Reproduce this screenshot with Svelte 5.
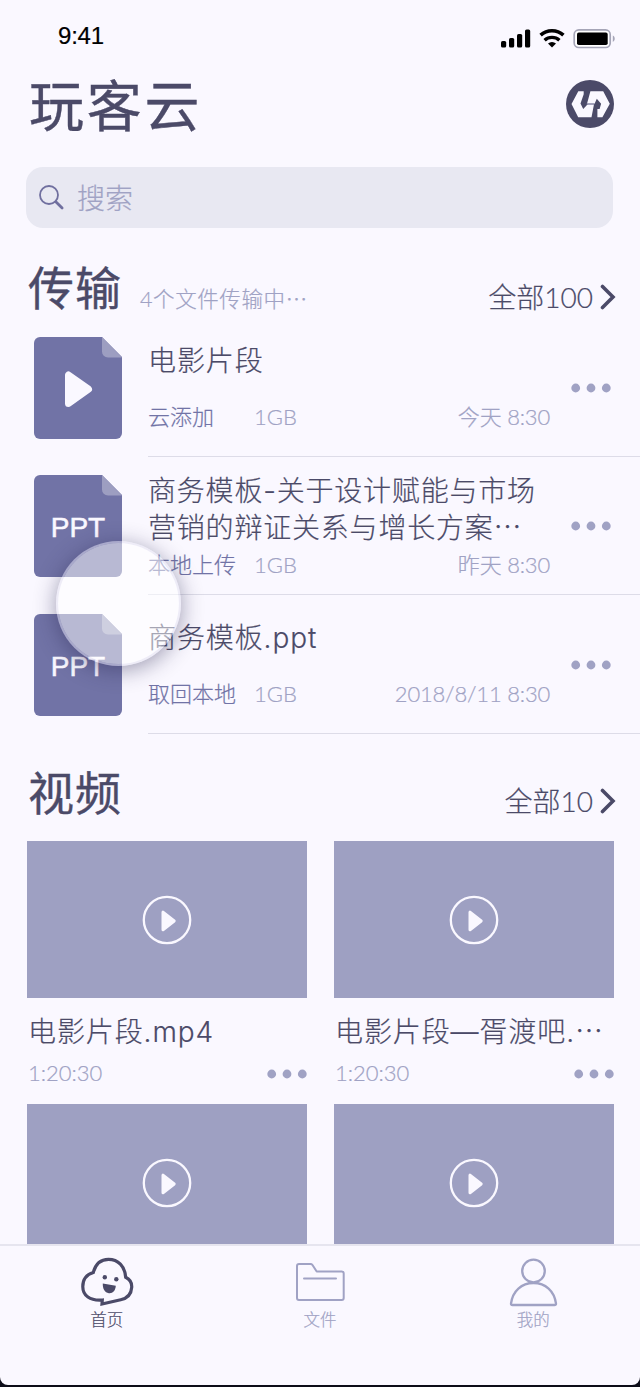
<script lang="ts">
  interface Transfer {
    name: string;
    kind: 'video' | 'ppt';
    source: string;
    size: string;
    time: string;
    wrap?: boolean;
  }

  const transfers: Transfer[] = [
    { name: '电影片段', kind: 'video', source: '云添加', size: '1GB', time: '今天 8:30' },
    {
      name: '商务模板-关于设计赋能与市场营销的辩证关系与增长方案⋯',
      kind: 'ppt',
      source: '本地上传',
      size: '1GB',
      time: '昨天 8:30',
      wrap: true
    },
    { name: '商务模板.ppt', kind: 'ppt', source: '取回本地', size: '1GB', time: '2018/8/11 8:30' }
  ];

  const videos = [
    { name: '电影片段.mp4', length: '1:20:30' },
    { name: '电影片段—胥渡吧.⋯', length: '1:20:30' },
    { name: '', length: '' },
    { name: '', length: '' }
  ];
</script>

{#snippet dots()}
  <svg class="dots" width="40" height="10" viewBox="0 0 40 10">
    <circle cx="4.7" cy="5" r="4.4" />
    <circle cx="20" cy="5" r="4.4" />
    <circle cx="35.3" cy="5" r="4.4" />
  </svg>
{/snippet}

{#snippet more(text: string)}
  <a class="more" href="#all">
    <span>{text}</span>
    <svg width="16" height="26" viewBox="0 0 16 26">
      <path d="M2.5 2.5 13 13 2.5 23.5" fill="none" stroke="#4b4a68" stroke-width="3.6" stroke-linecap="round" />
    </svg>
  </a>
{/snippet}

<div class="phone">
  <div class="status-bar">
    <span class="clock">9:41</span>
    <svg class="status-icons" width="116" height="22" viewBox="0 0 116 22">
      <rect x="1" y="13" width="5.2" height="6.5" rx="1.6" />
      <rect x="9" y="10" width="5.2" height="9.5" rx="1.6" />
      <rect x="17" y="6" width="5.2" height="13.5" rx="1.6" />
      <rect x="25" y="1.5" width="5.2" height="18" rx="1.6" />
      <path d="M40.6 7.2a17 17 0 0 1 22.8 0" fill="none" stroke="#000" stroke-width="3.6" />
      <path d="M44.6 12.2a11 11 0 0 1 14.8 0" fill="none" stroke="#000" stroke-width="3.4" />
      <path d="M48 15.6a6 6 0 0 1 8 0l-4 4z" />
      <rect x="74.2" y="1.9" width="36" height="17.6" rx="4.6" fill="#fff" stroke="#a5a5b7" stroke-width="1.7" />
      <rect x="77" y="4.6" width="30.7" height="12.4" rx="1.8" />
      <path d="M112.8 7.5c2.6 1.2 2.6 5.2 0 6.4z" fill="#a5a5b7" />
    </svg>
  </div>

  <header>
    <h1>玩客云</h1>
    <svg width="48" height="48" viewBox="0 0 48 48">
      <circle cx="24" cy="24" r="24" fill="#4b4a68" />
      <path d="M12.300 11.300h5.400v3L14.500 23.500l2.700 5.500 4.500-4.800H28L25.500 37.200H12.200L5.500 24z" fill="#faf8ff" />
      <path d="M24.400 11.300h12.800l6.600 12.400-7.400 13.500h-5V29h2.200l1.500-5.300-4.300-5-2.200 5h-7.600z" fill="#faf8ff" />
      <path d="M20.500 24h8" stroke="#77769a" stroke-width="1" />
    </svg>
  </header>

  <div class="search">
    <svg width="26" height="26" viewBox="0 0 26 26" fill="none" stroke="#706f9f" stroke-linecap="round">
      <circle cx="10" cy="10" r="9" stroke-width="1.8" />
      <path d="M16.800 16.800l6.300 6.300" stroke-width="2.800" />
    </svg>
    <span>搜索</span>
  </div>

  <div class="section-head transfer-head">
    <h2>传输</h2>
    <span class="hint">4个文件传输中⋯</span>
    {@render more('全部100')}
  </div>

  <ul class="transfers">
    {#each transfers as item}
      <li>
        <div class="file-icon">
          <svg width="88" height="102" viewBox="0 0 88 102">
            <path d="M6 0h62l20 20v76a6 6 0 0 1-6 6H6a6 6 0 0 1-6-6V6a6 6 0 0 1 6-6z" fill="#7173a6" />
            <path d="M68 0l20 20.500H74a6 6 0 0 1-6-6z" fill="#9d9ec1" />
            {#if item.kind === 'video'}
              <path d="M34.500 38v28.500L54.500 52.200z" fill="#faf8ff" stroke="#faf8ff" stroke-width="7" stroke-linejoin="round" />
            {/if}
          </svg>
          {#if item.kind === 'ppt'}
            <span>PPT</span>
          {/if}
        </div>
        <div class="file-body">
          <div class="file-text" class:wrap={item.wrap}>
            <div class="file-name">{item.name}</div>
            <div class="file-meta">
              <span class="source">{item.source}</span>
              <span class="size">{item.size}</span>
              <span class="time">{item.time}</span>
            </div>
          </div>
          {@render dots()}
        </div>
      </li>
    {/each}
  </ul>

  <div class="section-head video-head">
    <h2>视频</h2>
    {@render more('全部10')}
  </div>

  <div class="videos">
    {#each videos as video}
      <div class="video">
        <div class="thumb">
          <svg width="50" height="50" viewBox="0 0 50 50">
            <circle cx="25" cy="25" r="23.200" fill="none" stroke="#faf8ff" stroke-width="2.300" />
            <path d="M21 17.200v17.600L32.200 26z" fill="#faf8ff" stroke="#faf8ff" stroke-width="3" stroke-linejoin="round" />
          </svg>
        </div>
        {#if video.name}
          <div class="video-name">{video.name}</div>
          <div class="video-meta">
            <span>{video.length}</span>
            {@render dots()}
          </div>
        {/if}
      </div>
    {/each}
  </div>

  <nav>
    <a class="tab active" href="#home">
      <svg width="54" height="50" viewBox="0 0 54 50">
        <path
          d="M13.300 15.500C15.500 7 21 2.300 28.500 2.300c9.500 0 16.500 7 17.200 18 4.400 2.200 6.300 5.700 6 10.100-.4 6.500-4.500 11-11 12.300L22 47l.3-4C10 44 2.700 38.500 2.800 29.500c0-7 4-12 10.500-14z"
          fill="none"
          stroke="#4b4a68"
          stroke-width="3.200"
        />
        <circle cx="24.800" cy="20.300" r="2.200" fill="#4b4a68" />
        <circle cx="36.300" cy="22.300" r="2.200" fill="#4b4a68" />
        <path d="M22.800 26.500l13 2.300c-.3 5-3.300 8-7 7.400-4-.5-6.300-4.700-6-9.700z" fill="#4b4a68" />
      </svg>
      <span>首页</span>
    </a>
    <a class="tab" href="#files">
      <svg width="54" height="50" viewBox="0 0 54 50" fill="none" stroke="#a0a2c4" stroke-width="2" stroke-linejoin="round" stroke-linecap="round">
        <path d="M6 7h11.500q1.200 0 2 1l4.200 6.500h25q2 0 2 2v24.500q0 2-2 2H6q-2 0-2-2V9q0-2 2-2z" />
        <path d="M11 21.500h32" />
      </svg>
      <span>文件</span>
    </a>
    <a class="tab" href="#me">
      <svg width="54" height="50" viewBox="0 0 54 50" fill="none" stroke="#a0a2c4" stroke-width="2.300" stroke-linejoin="round">
        <circle cx="27.500" cy="14" r="11.300" />
        <path d="M5 46.500C6.700 34 15.500 26 27.500 26s20.800 8 22.500 20.500q.1 1.500-1.500 1.500h-42q-1.600 0-1.500-1.500z" />
      </svg>
      <span>我的</span>
    </a>
  </nav>

  <div class="touch"></div>
</div>

<style>
  :global(body) {
    margin: 0;
    background: #0c0c18;
  }

  .phone {
    position: relative;
    display: flex;
    flex-direction: column;
    box-sizing: border-box;
    width: 640px;
    height: 1385px;
    overflow: hidden;
    border-radius: 0 0 8px 8px;
    background: #faf8ff;
    color: #4b4a68;
    font-family: Lato, 'Noto Sans CJK SC', sans-serif;
    font-weight: 300;
    -webkit-text-stroke: 0.2px currentColor;
  }

  a {
    color: inherit;
    text-decoration: none;
  }

  h1,
  h2 {
    margin: 0;
    font-weight: 400;
    -webkit-text-stroke: 0.4px currentColor;
  }

  svg {
    display: block;
    flex: none;
  }

  .status-bar {
    display: flex;
    justify-content: space-between;
    align-items: center;
    height: 46px;
    padding: 14px 24px 0 58px;
  }

  .clock {
    margin-top: -2px;
    color: #000;
    font: 400 24px/28px 'Liberation Sans', sans-serif;
    letter-spacing: -0.2px;
  }

  .status-icons {
    margin-top: 4px;
  }

  header {
    display: flex;
    justify-content: space-between;
    align-items: center;
    height: 90px;
    padding: 0 26px 0 29px;
  }

  header svg {
    margin-top: -2px;
  }

  h1 {
    font-size: 55px;
    line-height: 80px;
    letter-spacing: 2.8px;
  }

  .search {
    display: flex;
    align-items: center;
    gap: 12px;
    box-sizing: border-box;
    height: 61px;
    margin: 17px 27px 0 26px;
    padding-left: 13px;
    border-radius: 17px;
    background: #e8e8f2;
    color: #a0a2c4;
    font-size: 28px;
    line-height: 40px;
  }

  .section-head {
    display: flex;
    align-items: center;
    padding: 0 24px 0 28px;
  }

  .transfer-head {
    height: 60px;
    margin-top: 30px;
  }

  .video-head {
    height: 60px;
    margin-top: 11px;
  }

  h2 {
    font-size: 46px;
    line-height: 60px;
    letter-spacing: 1px;
  }

  .hint {
    margin: 22px 0 0 18px;
    color: #a0a2c4;
    font-size: 21.5px;
    line-height: 30px;
    letter-spacing: 0.6px;
  }

  .more {
    display: flex;
    align-items: center;
    gap: 7px;
    margin: 17px 0 0 auto;
    font-size: 28px;
    line-height: 36px;
  }

  .transfers {
    margin: 0;
    padding: 19px 0 0 34px;
    list-style: none;
  }

  li {
    display: flex;
    gap: 26px;
    height: 138.3px;
  }

  .file-icon {
    display: grid;
    flex: none;
    height: 102px;
  }

  .file-icon > * {
    grid-area: 1 / 1;
  }

  .file-icon span {
    place-self: center;
    color: #faf8ff;
    font: 400 28px/32px 'Liberation Sans', sans-serif;
    margin-top: 4px;
    -webkit-text-stroke: 0.5px #faf8ff;
  }

  .file-body {
    display: flex;
    flex: 1;
    justify-content: space-between;
    box-sizing: border-box;
    height: 120px;
    padding-right: 29px;
    border-bottom: 1px solid #dddce8;
  }

  .file-body .dots {
    margin-top: 46px;
  }

  .dots {
    fill: #a0a2c4;
  }

  .file-text {
    width: 402px;
    padding-top: 6px;
  }

  .file-name,
  .video-name {
    font-family: Inter, 'Noto Sans CJK SC', sans-serif;
    font-size: 28px;
    line-height: 37px;
    letter-spacing: 0.9px;
  }

  .file-meta {
    display: flex;
    margin-top: 22px;
    color: #a0a2c4;
    font-size: 22px;
    line-height: 30px;
  }

  .file-text.wrap {
    padding-top: 0;
    margin-top: -2px;
  }

  .wrap .file-name {
    width: 390px;
    letter-spacing: 0.8px;
    word-break: break-all;
  }

  .wrap .file-meta {
    margin-top: 3px;
  }

  .source {
    width: 106px;
    color: #7173a6;
  }

  .time {
    margin-left: auto;
    letter-spacing: -0.2px;
  }

  .videos {
    display: grid;
    grid-template-columns: 280px 280px;
    grid-template-rows: 263px 140px;
    gap: 0 27px;
    height: 403px;
    margin: 18px 26px 0 27px;
    overflow: hidden;
  }

  .thumb {
    display: grid;
    place-items: center;
    box-sizing: border-box;
    height: 157px;
    padding-top: 2px;
    background: #9ea0c2;
  }

  .video-name {
    margin-top: 16px;
    padding-left: 1px;
    white-space: nowrap;
  }

  .video-meta {
    display: flex;
    justify-content: space-between;
    align-items: center;
    margin-top: 7px;
    padding-left: 1px;
    color: #a0a2c4;
    font-size: 22px;
    line-height: 30px;
  }

  .video-meta .dots {
    margin-top: 3px;
  }

  nav {
    display: grid;
    grid-template-columns: repeat(3, 1fr);
    flex: 1;
    border-top: 2px solid #e6e5ef;
  }

  .tab {
    display: flex;
    flex-direction: column;
    align-items: center;
    padding-top: 11px;
    color: #a0a2c4;
    font-size: 16.5px;
    line-height: 24px;
  }

  .tab.active {
    color: #4b4a68;
  }

  .tab span {
    margin-top: 1px;
  }

  /* Touch indicator floating over the list */
  .touch {
    position: absolute;
    top: 541px;
    left: 56px;
    box-sizing: border-box;
    width: 125px;
    height: 125px;
    border: 2px solid rgba(225, 223, 240, 0.5);
    border-radius: 50%;
    background: rgba(255, 255, 255, 0.5);
    background-clip: padding-box;
    box-shadow: 0 4px 22px rgba(40, 38, 80, 0.45);
  }
</style>
